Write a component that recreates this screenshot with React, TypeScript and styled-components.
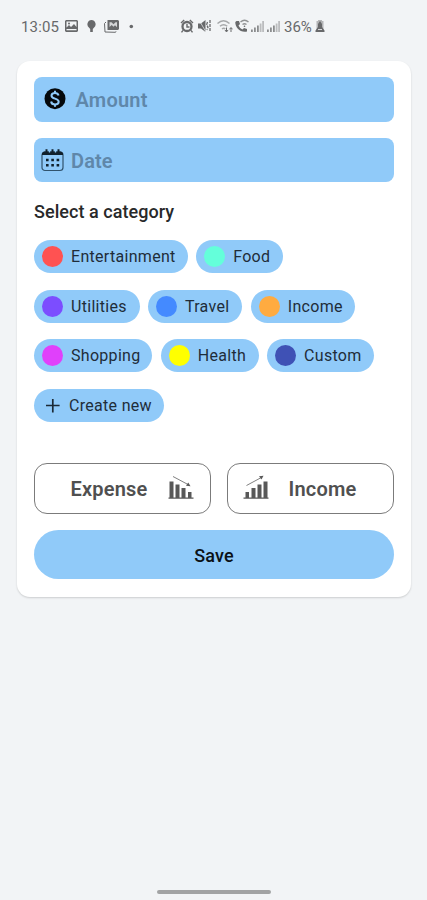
import React from "react";
import styled, { createGlobalStyle } from "styled-components";

const Global = createGlobalStyle`
  * { box-sizing: border-box; }
  body { margin: 0; background: #f2f4f6; font-family: Roboto, "Noto Sans", sans-serif; }
  button { font-family: inherit; margin: 0; padding: 0; border: 0; }
`;

const Screen = styled.div`
  width: 427px;
  height: 900px;
  display: flex;
  flex-direction: column;
  background: #f2f4f6;
  overflow: hidden;
`;

const StatusBar = styled.header`
  height: 60.5px;
  flex: none;
  display: flex;
  padding: 17px 0 0 21px;
  color: #68696b;
`;

const StatusText = styled.span<{ $w: number; $spacing: number; $left?: number }>`
  width: ${(p) => p.$w}px;
  padding-left: ${(p) => p.$left ?? 0}px;
  font-size: 15px;
  letter-spacing: ${(p) => p.$spacing}px;
  line-height: 20px;
  white-space: nowrap;
`;

const StatusIcon = styled.svg<{ $gap: number }>`
  height: 18px;
  flex: none;
  margin-left: ${(p) => p.$gap}px;
  fill: currentColor;
`;

const Card = styled.main`
  width: 394px;
  height: 536px;
  margin-left: 17px;
  padding: 16.8px 17px 0;
  display: flex;
  flex-direction: column;
  background: #fff;
  border-radius: 13px;
  box-shadow: 0 1px 2px rgba(0, 0, 0, 0.16);
`;

const Field = styled.label<{ $pad: number; $gap: number }>`
  height: 44.3px;
  flex: none;
  margin-bottom: 16px;
  padding-left: ${(p) => p.$pad}px;
  display: flex;
  align-items: center;
  gap: ${(p) => p.$gap}px;
  border-radius: 8px;
  background: #90caf9;
`;

const Placeholder = styled.span<{ $spacing: number }>`
  font-size: 20px;
  font-weight: 600;
  letter-spacing: ${(p) => p.$spacing}px;
  line-height: 24px;
  color: #5f87aa;
  padding-top: 2px;
`;

const Heading = styled.h1`
  margin: 2px 0 0;
  height: 24px;
  flex: none;
  font-size: 18px;
  font-weight: 500;
  line-height: 24px;
  letter-spacing: 0.05px;
  color: #28292a;
`;

const Categories = styled.div`
  margin-top: 16px;
  display: flex;
  flex-direction: column;
  gap: 16.7px;
`;

const ChipRow = styled.div`
  display: flex;
  gap: 8.4px;
`;

const Chip = styled.button<{ $w: number }>`
  width: ${(p) => p.$w}px;
  height: 33px;
  padding-left: 8px;
  display: flex;
  align-items: center;
  border-radius: 17px;
  background: #90caf9;
  color: #1f2d39;
  font-size: 16px;
  line-height: 20px;
  letter-spacing: 0.3px;
  white-space: nowrap;
`;

const ChipLabel = styled.span`
  padding-top: 1px;
`;

const Dot = styled.span<{ $color: string }>`
  width: 21px;
  height: 21px;
  flex: none;
  margin-right: 8px;
  border-radius: 50%;
  background: ${(p) => p.$color};
`;

const PlusIcon = styled.svg`
  width: 21px;
  height: 21px;
  flex: none;
  margin-right: 6px;
  fill: none;
  stroke: #1c2a36;
  stroke-width: 1.7;
`;

const TypeRow = styled.div`
  margin-top: 40.7px;
  display: flex;
  gap: 16px;
`;

const TypeButton = styled.button<{ $w: number; $left: number; $gap: number }>`
  width: ${(p) => p.$w}px;
  height: 51px;
  padding: 2px 0 0 ${(p) => p.$left}px;
  display: flex;
  align-items: center;
  gap: ${(p) => p.$gap}px;
  border: 1px solid #7b7b7b;
  border-radius: 13px;
  background: #fff;
  color: #505050;
  font-size: 20px;
  font-weight: 600;
  letter-spacing: 0.2px;
  line-height: 24px;
`;

const ChartIcon = styled.svg`
  width: 26px;
  height: 26px;
  flex: none;
  margin-top: -2px;
  fill: #585858;
`;

const Save = styled.button`
  height: 49px;
  flex: none;
  margin-top: 16px;
  border-radius: 25px;
  background: #90caf9;
  color: #0b1116;
  font-size: 18px;
  font-weight: 500;
  line-height: 22px;
  letter-spacing: 0.2px;
  padding-top: 3px;
`;

const HomeArea = styled.footer`
  margin-top: auto;
  height: 10px;
  display: flex;
  justify-content: center;
`;

const HomeBar = styled.div`
  width: 114px;
  height: 4px;
  border-radius: 2px;
  background: #a2a3a4;
`;

type Category = { name: string; color: string; width: number };

const rows: Category[][] = [
  [
    { name: "Entertainment", color: "#ff5252", width: 153.8 },
    { name: "Food", color: "#64ffda", width: 87 },
  ],
  [
    { name: "Utilities", color: "#7c4dff", width: 105.5 },
    { name: "Travel", color: "#448aff", width: 94.5 },
    { name: "Income", color: "#ffab40", width: 104.5 },
  ],
  [
    { name: "Shopping", color: "#e040fb", width: 118.3 },
    { name: "Health", color: "#ffff00", width: 98 },
    { name: "Custom", color: "#3f51b5", width: 107.3 },
  ],
];

const FallingChart = () => (
  <ChartIcon viewBox="0 0 26 26">
    <path d="M1.5 6.5h4v16.500h-4zM7.500 9.500h4V23h-4zM13.500 13h4v10h-4zM20 17h3.500v6H20zM.5 22.500h25v1.200H.5z" />
    <path d="M5 1.500L20 9.500" fill="none" stroke="#808080" strokeWidth="1" />
    <path d="M20.300 7.500l2.200 3.700-4.500-.4z" />
  </ChartIcon>
);

const RisingChart = () => (
  <ChartIcon viewBox="0 0 26 26">
    <path d="M20.500 6.500h4V23h-4zM14.500 9.500h4V23h-4zM8.500 13h4v10h-4zM2.500 17H6v6H2.500zM.5 22.500h25v1.200H.5z" />
    <path d="M3.500 10.500L18 2.700" fill="none" stroke="#808080" strokeWidth="1" />
    <path d="M16 1.200l4.500-.4-2 3.700z" />
  </ChartIcon>
);

const Signal = ({ gap }: { gap: number }) => (
  <StatusIcon $gap={gap} width="13" viewBox="0 0 13 18">
    <path d="M0 12.500h1.800V15H0zM3 10.500h1.800V15H3zM6 8.500h1.800V15H6z" opacity="0.750" />
    <path d="M8.700 6.500h1.800V15H8.700zM11.200 4H13v11h-1.800z" opacity="0.400" />
  </StatusIcon>
);

export default function App() {
  return (
    <>
      <Global />
      <Screen>
        <StatusBar>
          <StatusText $w={38} $spacing={0.15}>13:05</StatusText>
          <StatusIcon $gap={6} width="13" viewBox="0 0 13 18">
            <path fillRule="evenodd" d="M1 3h11l1 1v10l-1 1H1l-1-1V4zM1.5 4.5v6L4 8l2 2 3-3 2.5 3V4.5zM1.5 12v1.3h10V12z" />
            <circle cx="4" cy="6.6" r="1" />
          </StatusIcon>
          <StatusIcon $gap={9} width="9" viewBox="0 0 9 18">
            <path d="M4.500 3a4.300 4.300 0 0 1 2.400 7.700L5.800 12v3H3.200v-3l-1.100-1.300A4.300 4.300 0 0 1 4.500 3z" />
          </StatusIcon>
          <StatusIcon $gap={8} width="15" viewBox="0 0 15 18">
            <path d="M3.5 3H14l1 1v8l-1 1H3.5z" />
            <path d="M2 5L.5 6.500 1 15l10.500.3.500-1" fill="none" stroke="currentColor" strokeWidth="1" />
            <path d="M5.500 5.200h2l2 2.100 2-2.100h1.500v5l-2-2-1.500 1.500L7.700 8l-2.200 2z" fill="#d5d6d8" />
          </StatusIcon>
          <StatusIcon $gap={10} width="5" viewBox="0 0 5 18">
            <circle cx="2.300" cy="9.500" r="1.800" />
          </StatusIcon>
          <StatusIcon $gap={46} width="14" viewBox="0 0 14 18">
            <circle cx="7" cy="9.500" r="4.500" fill="none" stroke="currentColor" strokeWidth="2.300" />
            <path d="M1 6l3.200-3M13 6L9.800 3M3 13.400l-1.500 2M11 13.400l1.500 2M7 7v3h2.500" fill="none" stroke="currentColor" strokeWidth="1.400" />
          </StatusIcon>
          <StatusIcon $gap={4} width="13" viewBox="0 0 13 18">
            <path d="M0 6.500h3L7.500 3v12L3 11.500H0z" />
            <path d="M1 3l7 12" stroke="#f2f4f6" strokeWidth="0.700" />
            <path d="M9.500 5l-1 3 1.500 2-1 3M12 3v12" fill="none" stroke="currentColor" strokeWidth="1.300" strokeDasharray="3 1" />
          </StatusIcon>
          <StatusIcon $gap={6} width="16" viewBox="0 0 16 18">
            <path d="M.5 6.500c4-3.700 8-3.700 12 0M3 9.300c2.200-2 5-2 7.200 0M5 11.800q1.800-1.200 3.300 0" fill="none" stroke="currentColor" strokeWidth="1.500" opacity="0.550" />
            <path d="M9.500 10.500v4M8 13l1.500 2 1.500-2M14 15v-4M12.500 12.300L14 10.500l1.500 1.800" fill="none" stroke="currentColor" strokeWidth="1" />
          </StatusIcon>
          <StatusIcon $gap={2} width="14" viewBox="0 0 14 18">
            <path d="M1.500 4H4l1 3-1.500 1.500c1 2 2.200 3.200 4 4L9 11l3 1v2.500C5.500 16 0 10.500.3 5z" />
            <path d="M5.500 5c2.500-2.200 5.500-2.200 8 0M7.500 7.500q2-1.400 4 0" fill="none" stroke="currentColor" strokeWidth="1.400" opacity="0.700" />
            <circle cx="9.500" cy="9.300" r=".8" />
          </StatusIcon>
          <Signal gap={2} />
          <Signal gap={3} />
          <StatusText $w={35} $spacing={0} $left={4}>36%</StatusText>
          <StatusIcon $gap={0} width="10" viewBox="0 0 10 18">
            <path d="M3 3h4v1h1.500v11h-7V4H3z" opacity="0.450" />
            <path d="M5 4l2 3v3l2.500 3.500V15H.5v-1.500L3 10V7z" />
            <path d="M3 12.500h4" stroke="#f2f4f6" strokeWidth=".8" />
          </StatusIcon>
        </StatusBar>

        <Card>
          <Field $pad={9.5} $gap={10}>
            <svg width="22" height="22" viewBox="0 0 22 22">
              <circle cx="11" cy="10.700" r="10.500" fill="#05090c" />
              <path d="M14.600 7.500C14 5.700 12.700 5 11 5 9 5 7.500 6 7.500 7.700c0 3.800 7.200 2 7.200 6 0 1.800-1.700 2.800-3.700 2.800s-3.600-1-3.900-3M11 2.800V5M11 16.500v2.300" fill="none" stroke="#90caf9" strokeWidth="2" />
            </svg>
            <Placeholder $spacing={0.2}>Amount</Placeholder>
          </Field>
          <Field $pad={6.5} $gap={7.5}>
            <svg width="23" height="24" viewBox="0 0 23 24">
              <rect x="1" y="4" width="21" height="18.500" rx="3" fill="none" stroke="#31536d" strokeWidth="1.200" />
              <path d="M1 7V5l2-1.500h17L22 5v2z" fill="#10212d" />
              <path d="M5.500 1.200v4.300M11.500 1.200v4.300M17.500 1.200v4.300" stroke="#10212d" strokeWidth="2" />
              <path d="M8.500 2v2.500M14.500 2v2.500" stroke="#90caf9" strokeWidth="1.300" />
              <path d="M5 10.800h2.600v2.400H5zM10.300 10.800h2.600v2.400h-2.600zM15.600 10.800h2.600v2.400h-2.600zM5 16h2.600v2.400H5zM10.300 16h2.600v2.400h-2.600zM15.600 16h2.600v2.400h-2.600z" fill="#10212d" />
            </svg>
            <Placeholder $spacing={0.1}>Date</Placeholder>
          </Field>
          <Heading>Select a category</Heading>
          <Categories>
            {rows.map((row, i) => (
              <ChipRow key={i}>
                {row.map((c) => (
                  <Chip key={c.name} $w={c.width}>
                    <Dot $color={c.color} />
                    <ChipLabel>{c.name}</ChipLabel>
                  </Chip>
                ))}
              </ChipRow>
            ))}
            <ChipRow>
              <Chip $w={130.3}>
                <PlusIcon viewBox="0 0 21 21">
                  <path d="M10.800 4v13.400M4 10.500h13.600" />
                </PlusIcon>
                <ChipLabel>Create new</ChipLabel>
              </Chip>
            </ChipRow>
          </Categories>
          <TypeRow>
            <TypeButton $w={177} $left={35.5} $gap={20}>
              Expense
              <FallingChart />
            </TypeButton>
            <TypeButton $w={168} $left={15} $gap={20}>
              <RisingChart />
              Income
            </TypeButton>
          </TypeRow>
          <Save>Save</Save>
        </Card>

        <HomeArea>
          <HomeBar />
        </HomeArea>
      </Screen>
    </>
  );
}
